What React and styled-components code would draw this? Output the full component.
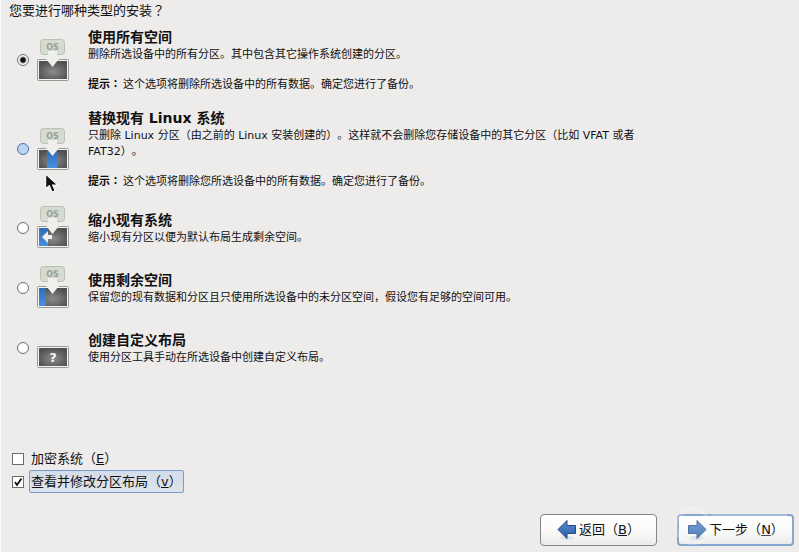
import React, { useState } from 'react';
import styled, { createGlobalStyle } from 'styled-components';

const options = [
  {
    id: 'all',
    title: '使用所有空间',
    text: '删除所选设备中的所有分区。其中包含其它操作系统创建的分区。',
    hint: '这个选项将删除所选设备中的所有数据。确定您进行了备份。',
  },
  {
    id: 'replace',
    title: '替换现有 Linux 系统',
    text:
      '只删除 Linux 分区（由之前的 Linux 安装创建的）。这样就不会删除您存储设备中的其它分区（比如 VFAT 或者 FAT32）。',
    hint: '这个选项将删除您所选设备中的所有数据。确定您进行了备份。',
  },
  {
    id: 'shrink',
    title: '缩小现有系统',
    text: '缩小现有分区以便为默认布局生成剩余空间。',
  },
  {
    id: 'free',
    title: '使用剩余空间',
    text:
      '保留您的现有数据和分区且只使用所选设备中的未分区空间，假设您有足够的空间可用。',
  },
  {
    id: 'custom',
    title: '创建自定义布局',
    text: '使用分区工具手动在所选设备中创建自定义布局。',
  },
];

const DiskIcon = ({ kind }) => (
  <Disk viewBox='0 0 32 45' aria-hidden='true'>
    <defs>
      <radialGradient id={`disk-${kind}`} cx='0.5' cy='0.6' r='0.6'>
        <stop offset='0' stopColor='#8c8c8c' />
        <stop offset='1' stopColor='#505050' />
      </radialGradient>
      <linearGradient id={`blue-${kind}`} x1='0' y1='0' x2='0' y2='1'>
        <stop offset='0' stopColor='#2f6cb8' />
        <stop offset='1' stopColor='#4a90e0' />
      </linearGradient>
    </defs>
    {kind !== 'custom' && (
      <>
        <rect
          x='3.5'
          y='1.5'
          width='24'
          height='15'
          rx='3'
          fill='#d5dbd0'
          stroke='#b9c1b5'
        />
        <text
          x='15.5'
          y='12'
          textAnchor='middle'
          fontFamily='DejaVu Sans'
          fontWeight='bold'
          fontSize='8'
          fill='#989f94'
        >
          OS
        </text>
      </>
    )}
    <rect x='0.5' y='21.5' width='31' height='21' rx='1' fill='#f4f4f2' stroke='#999995' />
    <rect x='2' y='23' width='28' height='18' fill={`url(#disk-${kind})`} />
    {kind === 'replace' && (
      <rect x='10' y='23' width='10' height='18' fill={`url(#blue-${kind})`} />
    )}
    {(kind === 'shrink' || kind === 'free') && (
      <rect
        x='2'
        y='23'
        width={kind === 'shrink' ? 9 : 7}
        height='18'
        fill={`url(#blue-${kind})`}
      />
    )}
    {kind === 'shrink' && (
      <path d='M5 32 L11 26 V30 H15 V34 H11 V38 Z' fill='#f0f0ec' />
    )}
    {kind !== 'custom' && (
      <path d='M11 13 H20 V19 H23.5 L15.5 29 L7.5 19 H11 Z' fill='#efefec' />
    )}
    {kind === 'custom' && (
      <text
        x='16'
        y='37'
        textAnchor='middle'
        fontFamily='DejaVu Sans'
        fontWeight='bold'
        fontSize='13'
        fill='#f4f4f4'
      >
        ?
      </text>
    )}
  </Disk>
);

const ArrowIcon = ({ forward }) => (
  <Arrow viewBox='0 0 20 22' aria-hidden='true'>
    <defs>
      <linearGradient id={forward ? 'next' : 'back'} x1='0' y1='0' x2='0' y2='1'>
        <stop offset='0' stopColor={forward ? '#7b9fd0' : '#5c8fd0'} />
        <stop offset='1' stopColor={forward ? '#4f7dbb' : '#2a5ca5'} />
      </linearGradient>
    </defs>
    <ellipse cx='10' cy='19' rx='7' ry='2' fill='#e2e2e2' />
    <path
      d='M1 10.5 L10 1.5 V6.5 H18.5 V14.5 H10 V19.5 Z'
      transform={forward ? 'matrix(-1 0 0 1 20 0)' : undefined}
      fill={`url(#${forward ? 'next' : 'back'})`}
      stroke={forward ? '#4a72a8' : '#204a87'}
      strokeLinejoin='round'
    />
  </Arrow>
);

const App = () => {
  const [choice, setChoice] = useState('all');
  const [encrypt, setEncrypt] = useState(false);
  const [review, setReview] = useState(true);

  return (
    <Page>
      <GlobalStyle />
      <Question>
        您要进行哪种类型的安装<Mark>？</Mark>
      </Question>
      <Options>
        {options.map((option) => (
          <Option key={option.id}>
            <Radio
              type='radio'
              name='install'
              $hot={option.id === 'replace'}
              checked={choice === option.id}
              onChange={() => setChoice(option.id)}
            />
            <DiskIcon kind={option.id} />
            <Details>
              <Title>{option.title}</Title>
              <Text>{option.text}</Text>
              {option.hint && (
                <Hint>
                  <HintLabel>
                    提示<Mark>：</Mark>
                  </HintLabel>
                  {option.hint}
                </Hint>
              )}
            </Details>
          </Option>
        ))}
      </Options>

      <Checks>
        <CheckRow>
          <Checkbox
            type='checkbox'
            checked={encrypt}
            onChange={(e) => setEncrypt(e.target.checked)}
          />
          <CheckLabel>
            加密系统（<u>E</u>）
          </CheckLabel>
        </CheckRow>
        <CheckRow>
          <Checkbox
            type='checkbox'
            checked={review}
            onChange={(e) => setReview(e.target.checked)}
          />
          <CheckLabel $active>
            查看并修改分区布局（<u>v</u>）
          </CheckLabel>
        </CheckRow>
      </Checks>

      <Footer>
        <Button type='button'>
          <ArrowIcon />
          <span>
            返回（<u>B</u>）
          </span>
        </Button>
        <Button type='button' $primary>
          <ArrowIcon forward />
          <span>
            下一步（<u>N</u>）
          </span>
        </Button>
        <Watermark viewBox='0 0 130 44' aria-hidden='true'>
          <circle cx='24' cy='22' r='17' />
          <path d='M42 12 H118 M42 32 H118' />
        </Watermark>
      </Footer>

      <Pointer viewBox='0 0 14 20' aria-hidden='true'>
        <path
          d='M1 1 V15 L4.5 12 L7 18 L10 17 L7.5 11.5 H12.5 Z'
          fill='#111'
          stroke='#fff'
        />
      </Pointer>
    </Page>
  );
};

const GlobalStyle = createGlobalStyle`
  * {
    box-sizing: border-box;
  }
  body {
    margin: 0;
    background: #edeceb;
    color: #111;
    font-family: 'DejaVu Sans', 'Noto Sans CJK SC', sans-serif;
    font-size: 13px;
    text-spacing-trim: space-all;
  }
`;

const Page = styled.main`
  position: relative;
  display: flex;
  flex-direction: column;
  min-height: 100vh;
  padding: 1px 5px 6px 8px;
  border-left: 1px solid #f8f8f8;
`;
const Question = styled.h1`
  margin: 0 0 6px;
  font-size: 13px;
  font-weight: normal;
  line-height: 20px;
`;
const Mark = styled.span`
  font-family: 'Noto Sans CJK JP', sans-serif;
  line-height: 0;
`;
const Options = styled.div`
  display: flex;
  flex-direction: column;
  gap: 15px;
  padding-left: 8px;
`;
const Option = styled.label`
  display: flex;
  align-items: center;
`;
const Radio = styled.input`
  appearance: none;
  flex: none;
  width: 12px;
  height: 12px;
  margin: 0 8px 0 0;
  border: 1px solid ${({ $hot }) => ($hot ? '#4f74a8' : '#6c6c6a')};
  border-radius: 50%;
  background: ${({ $hot }) => ($hot ? '#bcd3f2' : '#fff')};

  &:checked {
    background: radial-gradient(circle, #111 2px, #fff 4px);
  }
`;
const Disk = styled.svg`
  flex: none;
  width: 32px;
  height: 45px;
  margin-right: 19px;
`;
const Details = styled.div`
  max-width: 560px;
  font-size: 11px;
  line-height: 16px;
`;
const Title = styled.h2`
  margin: 0;
  font-size: 14px;
  line-height: 20px;
`;
const Text = styled.p`
  margin: 0;
`;
const Hint = styled.p`
  margin: 14px 0 0;
`;
const HintLabel = styled.b`
  margin-right: 2px;
`;
const Checks = styled.div`
  margin: auto 0 21px 3px;
`;
const CheckRow = styled.label`
  display: flex;
  align-items: center;
  width: fit-content;
`;
const Checkbox = styled.input`
  appearance: none;
  flex: none;
  width: 12px;
  height: 12px;
  margin: 0 5px 0 0;
  border: 1px solid #6c6c6a;
  background: #fff;

  &:checked {
    background: #fff
      url("data:image/svg+xml,%3Csvg xmlns='http://www.w3.org/2000/svg' viewBox='0 0 10 10'%3E%3Cpath d='M2 5 L4 8 L8.5 1.5' fill='none' stroke='%23111' stroke-width='1.8'/%3E%3C/svg%3E");
  }
`;
const CheckLabel = styled.span`
  padding: 0 1px;
  border: 1px solid ${({ $active }) => ($active ? '#7b9ac8' : 'transparent')};
  border-radius: 2px;
  background: ${({ $active }) =>
    $active ? 'linear-gradient(#d3dcea, #dfe4ec)' : 'none'};
  line-height: 21px;
`;
const Footer = styled.footer`
  position: relative;
  display: flex;
  justify-content: flex-end;
  gap: 20px;
`;
const Button = styled.button`
  display: flex;
  align-items: center;
  justify-content: center;
  gap: 2px;
  width: 117px;
  height: 32px;
  padding: 0;
  border: ${({ $primary }) =>
    $primary ? '2px solid #86a5cf' : '1px solid #858583'};
  border-radius: 4px;
  background: linear-gradient(#fff, #fbfbfa 50%, #ebebea);
  color: #111;
  font: inherit;
  line-height: 20px;
  white-space: nowrap;
  text-spacing-trim: inherit;
`;
const Arrow = styled.svg`
  flex: none;
  width: 20px;
  height: 22px;
`;
const Watermark = styled.svg`
  position: absolute;
  right: -5px;
  bottom: -2px;
  width: 130px;
  height: 44px;
  fill: none;
  stroke: #fff;
  stroke-width: 4;
  opacity: 0.25;
  pointer-events: none;
`;
const Pointer = styled.svg`
  position: absolute;
  top: 173px;
  left: 43px;
  width: 16px;
  height: 21px;
`;

export default App;
